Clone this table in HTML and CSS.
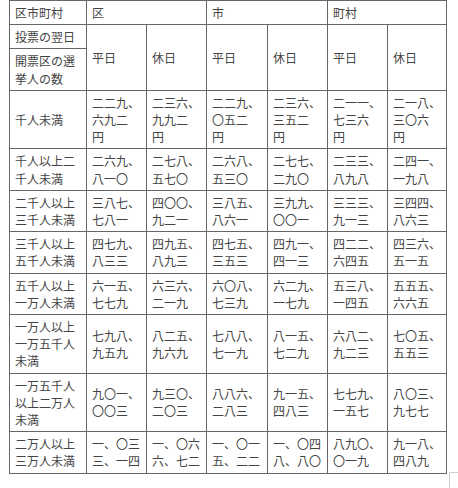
FILE: index.html
```html
<!DOCTYPE html>
<html lang="ja">
<head>
<meta charset="utf-8">
<title>選挙人の数と単価</title>
<link rel="stylesheet" href="styles.css">
</head>
<body>
<div class="wrap">
<table class="grid">
<colgroup>
<col class="c-head"><col class="c-d"><col class="c-d"><col class="c-d2"><col class="c-d"><col class="c-d"><col class="c-d3">
</colgroup>
<tbody>
<tr><td>区市町村</td><td colspan="2">区</td><td colspan="2">市</td><td colspan="2">町村</td></tr>
<tr><td>投票の翌日</td><td rowspan="2">平日</td><td rowspan="2">休日</td><td rowspan="2">平日</td><td rowspan="2">休日</td><td rowspan="2">平日</td><td rowspan="2">休日</td></tr>
<tr><td>開票区の選<br>挙人の数</td></tr>
<tr><td>千人未満</td><td>二二九、<br>六九二<br>円</td><td>二三六、<br>九九二<br>円</td><td>二二九、<br>〇五二<br>円</td><td>二三六、<br>三五二<br>円</td><td>二一一、<br>七三六<br>円</td><td>二一八、<br>三〇六<br>円</td></tr>
<tr><td>千人以上二<br>千人未満</td><td>二六九、<br>八一〇</td><td>二七八、<br>五七〇</td><td>二六八、<br>五三〇</td><td>二七七、<br>二九〇</td><td>二三三、<br>八九八</td><td>二四一、<br>一九八</td></tr>
<tr><td>二千人以上<br>三千人未満</td><td>三八七、<br>七八一</td><td>四〇〇、<br>九二一</td><td>三八五、<br>八六一</td><td>三九九、<br>〇〇一</td><td>三三三、<br>九一三</td><td>三四四、<br>八六三</td></tr>
<tr><td>三千人以上<br>五千人未満</td><td>四七九、<br>八三三</td><td>四九五、<br>八九三</td><td>四七五、<br>三五三</td><td>四九一、<br>四一三</td><td>四二二、<br>六四五</td><td>四三六、<br>五一五</td></tr>
<tr><td>五千人以上<br>一万人未満</td><td>六一五、<br>七七九</td><td>六三六、<br>二一九</td><td>六〇八、<br>七三九</td><td>六二九、<br>一七九</td><td>五三八、<br>一四五</td><td>五五五、<br>六六五</td></tr>
<tr><td>一万人以上<br>一万五千人<br>未満</td><td>七九八、<br>九五九</td><td>八二五、<br>九六九</td><td>七八八、<br>七一九</td><td>八一五、<br>七二九</td><td>六八二、<br>九二三</td><td>七〇五、<br>五五三</td></tr>
<tr><td>一万五千人<br>以上二万人<br>未満</td><td>九〇一、<br>〇〇三</td><td>九三〇、<br>二〇三</td><td>八八六、<br>二八三</td><td>九一五、<br>四八三</td><td>七七九、<br>一五七</td><td>八〇三、<br>九七七</td></tr>
<tr><td>二万人以上<br>三万人未満</td><td>一、〇三<br>三、一四</td><td>一、〇六<br>六、七二</td><td>一、〇一<br>五、二二</td><td>一、〇四<br>八、八〇</td><td>八九〇、<br>〇一九</td><td>九一八、<br>四八九</td></tr>
</tbody>
</table>
</div>
<div class="corner"></div>
</body>
</html>
```
FILE: styles.css
```css
html, body {
  margin: 0;
  padding: 0;
  background: #fff;
}
body {
  font-family: "Noto Sans CJK JP", "Noto Sans", sans-serif;
  font-size: 12px;
  color: #444;
  position: relative;
  height: 488px;
  overflow: hidden;
}
.wrap {
  padding-left: 9px;
}
.grid {
  border-collapse: collapse;
  table-layout: fixed;
  width: 438px;
  border: 1px solid #666;
}
.c-head { width: 77px; }
.c-d { width: 60px; }
.c-d2 { width: 61px; }
.c-d3 { width: 59px; }
.grid td {
  border: 1px solid #666;
  padding: 3px 5px;
  line-height: 17.2px;
  vertical-align: middle;
  text-align: left;
  white-space: nowrap;
  overflow: hidden;
}
.corner {
  position: absolute;
  left: 449px;
  top: 472px;
  width: 8px;
  height: 15px;
  border-top: 1px solid #cfcfcf;
  border-left: 1px solid #cfcfcf;
}
```
